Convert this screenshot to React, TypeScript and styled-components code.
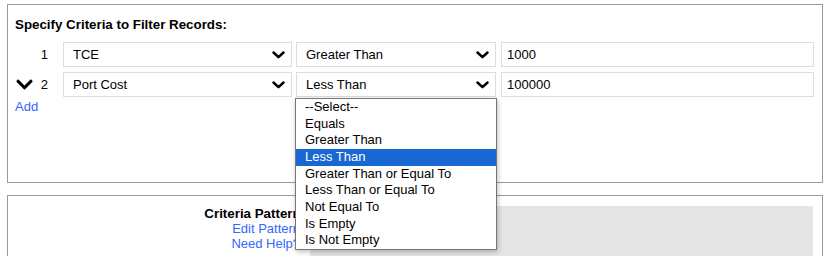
import React from "react";
import styled, { createGlobalStyle } from "styled-components";

const Global = createGlobalStyle`
  html, body { margin: 0; padding: 0; background: #fff; }
  body { font-family: "Liberation Sans", Arial, sans-serif; font-size: 13px; color: #000; }
`;

const Page = styled.div`
  padding: 4px 2px 0 7px;
  display: flex;
  flex-direction: column;
  gap: 12px;
  height: 252px;
  overflow: hidden;
`;

const Panel = styled.section<{ $h: number }>`
  box-sizing: border-box;
  border: 1px solid #999;
  width: 816px;
  height: ${(p) => p.$h}px;
  flex-shrink: 0;
`;

const FilterPanel = styled(Panel)`
  padding: 12px 8px 0 7px;
`;

const Title = styled.div`
  font-weight: bold;
  font-size: 13.33px;
  line-height: 15px;
  margin-bottom: 10px;
`;

const Rows = styled.div`
  display: flex;
  flex-direction: column;
  gap: 5px;
`;

const Row = styled.div`
  display: flex;
  align-items: center;
  height: 25px;
`;

const RowNum = styled.div`
  width: 33px;
  margin-right: 15px;
  display: flex;
  align-items: center;
  justify-content: flex-end;
  gap: 8px;
  font-size: 13px;
`;

const Cell = styled.div<{ $w: number; $ml: number }>`
  position: relative;
  width: ${(p) => p.$w}px;
  margin-left: ${(p) => p.$ml}px;
  height: 25px;
`;

const SelectBox = styled.div`
  box-sizing: border-box;
  height: 25px;
  border: 1px solid #ddd;
  background: #fff;
  display: flex;
  align-items: center;
  justify-content: space-between;
  padding: 0 6px 0 9px;
  font-size: 13px;
`;

const Input = styled.div`
  box-sizing: border-box;
  height: 25px;
  border: 1px solid #ddd;
  display: flex;
  align-items: center;
  padding-left: 5px;
  font-size: 13px;
`;

const AddLink = styled.a`
  display: block;
  margin-top: 2px;
  color: #3366ff;
  font-size: 13px;
  line-height: 15px;
  text-decoration: none;
`;

const Menu = styled.ul`
  position: absolute;
  top: 26px;
  left: -1px;
  width: 202px;
  box-sizing: border-box;
  margin: 0;
  padding: 0;
  list-style: none;
  background: #fff;
  border: 1px solid #767676;
  box-shadow: 1px 2px 5px rgba(0, 0, 0, 0.25);
  z-index: 10;
`;

const MenuItem = styled.li<{ $active?: boolean }>`
  height: 16.67px;
  line-height: 16.67px;
  padding-left: 9px;
  font-size: 13px;
  white-space: nowrap;
  background: ${(p) => (p.$active ? "#1967d2" : "transparent")};
  color: ${(p) => (p.$active ? "#fff" : "#000")};
`;

const PatternPanel = styled(Panel)`
  padding: 10px 9px 0 8px;
  display: flex;
  gap: 5px;
`;

const PatternLabels = styled.div`
  width: 292px;
  text-align: right;
  line-height: 15px;
`;

const PatternTitle = styled.div`
  font-weight: bold;
  font-size: 13.33px;
`;

const LabelLink = styled.a`
  display: block;
  padding-right: 5px;
  color: #3366ff;
  font-size: 13px;
  text-decoration: none;
`;

const PatternBox = styled.div`
  width: 508px;
  height: 80px;
  background: #e5e5e5;
`;

const SmallChevron = () => (
  <svg width="13" height="8" viewBox="0 0 13 8">
    <polyline points="1.5,1.5 6.5,6.2 11.5,1.5" fill="none" stroke="#000" strokeWidth="2.5" strokeLinecap="round" strokeLinejoin="round" />
  </svg>
);

const BigChevron = () => (
  <svg width="17" height="19" viewBox="0 0 448 512">
    <path d="M207.029 381.476L12.686 187.132c-9.373-9.373-9.373-24.569 0-33.941l22.667-22.667c9.357-9.357 24.522-9.375 33.901-.04L224 284.505l154.745-154.021c9.379-9.335 24.544-9.317 33.901.04l22.667 22.667c9.373 9.373 9.373 24.569 0 33.941L240.971 381.476c-9.373 9.372-24.569 9.372-33.942 0z" fill="#000" />
  </svg>
);

const operators = [
  "--Select--",
  "Equals",
  "Greater Than",
  "Less Than",
  "Greater Than or Equal To",
  "Less Than or Equal To",
  "Not Equal To",
  "Is Empty",
  "Is Not Empty",
];

const rows = [
  { n: 1, field: "TCE", op: "Greater Than", value: "1000", open: false },
  { n: 2, field: "Port Cost", op: "Less Than", value: "100000", open: true },
];

export default function App() {
  return (
    <>
      <Global />
      <Page>
        <FilterPanel $h={179}>
          <Title>Specify Criteria to Filter Records:</Title>
          <Rows>
            {rows.map((r) => (
              <Row key={r.n}>
                <RowNum>
                  {r.n > 1 && <BigChevron />}
                  <span>{r.n}</span>
                </RowNum>
                <Cell $w={229} $ml={0}>
                  <SelectBox>
                    <span>{r.field}</span>
                    <SmallChevron />
                  </SelectBox>
                </Cell>
                <Cell $w={200} $ml={4}>
                  <SelectBox>
                    <span>{r.op}</span>
                    <SmallChevron />
                  </SelectBox>
                  {r.open && (
                    <Menu>
                      {operators.map((o) => (
                        <MenuItem key={o} $active={o === r.op}>
                          {o}
                        </MenuItem>
                      ))}
                    </Menu>
                  )}
                </Cell>
                <Cell $w={313} $ml={5}>
                  <Input>{r.value}</Input>
                </Cell>
              </Row>
            ))}
          </Rows>
          <AddLink href="#">Add</AddLink>
        </FilterPanel>
        <PatternPanel $h={120}>
          <PatternLabels>
            <PatternTitle>Criteria Pattern:</PatternTitle>
            <LabelLink href="#">Edit Pattern</LabelLink>
            <LabelLink href="#">Need Help?</LabelLink>
          </PatternLabels>
          <PatternBox />
        </PatternPanel>
      </Page>
    </>
  );
}
